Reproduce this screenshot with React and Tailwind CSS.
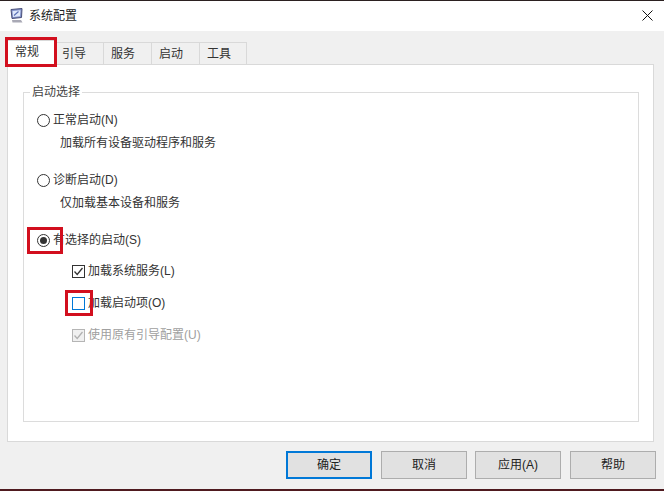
import React from 'react';

const tabs = [
    { label: '常规', cls: 'w-[48px] pl-[7px] pb-[2px] h-[24px] -mt-[2px] bg-white border-l' },
    { label: '引导', cls: 'w-[49px] pl-[7px] bg-[#f0f0f0]' },
    { label: '服务', cls: 'w-[48px] pl-[7px] bg-[#f0f0f0]' },
    { label: '启动', cls: 'w-[48px] pl-[7px] bg-[#f0f0f0]' },
    { label: '工具', cls: 'w-[47px] pl-[7px] bg-[#f0f0f0]' },
];

const Radio = ({ checked }) => (
    <span className="w-[13px] h-[13px] rounded-full border border-[#333333] bg-white flex items-center justify-center shrink-0">
        {checked && <span className="w-[7px] h-[7px] rounded-full bg-[#333333]" />}
    </span>
);

const Check = ({ checked, disabled, focus }) => (
    <span className={`w-[13px] h-[13px] border flex items-center justify-center shrink-0 ${disabled ? 'border-[#b5b5b5] bg-[#f0f0f0]' : focus ? 'border-[#0078d7] bg-white' : 'border-[#333333] bg-white'}`}>
        {checked && (
            <svg width="11" height="11" viewBox="0 0 11 11" fill="none">
                <path d="M1.5 5.5 L4.2 8.5 L9.5 2" stroke={disabled ? '#b0b0b0' : '#333333'} strokeWidth="1.3" />
            </svg>
        )}
    </span>
);

const Button = ({ label, primary, className }) => (
    <button className={`w-[86px] h-[28px] bg-[#e1e1e1] text-[12px] text-[#222222] ${primary ? 'border-2 border-[#0078d7]' : 'border border-[#adadad]'} ${className || ''}`}>
        {label}
    </button>
);

const RedBox = ({ className }) => (
    <div className={`absolute border-[3px] border-[#d20f1e] pointer-events-none ${className}`} />
);

export default function App() {
    return (
        <div className="relative w-[664px] h-[491px] overflow-hidden flex flex-col bg-[#f0f0f0] text-[12px] text-[#333333] font-['Liberation_Sans','Noto_Sans_CJK_SC',sans-serif]">
            <div className="h-px bg-[#2b2020]" />
            {/* title bar */}
            <div className="h-[30px] bg-white flex items-center pl-[9px] pr-[11px]">
                <svg width="15" height="15" viewBox="0 0 15 15" className="mr-[5px] -mt-[1px]">
                    <path d="M2 1.5 L13 0.5 L12.5 9.5 L3 10.5 Z" fill="#7f8fc8" stroke="#4a4f78" />
                    <path d="M3.5 3 L11.5 2.2 L11 8.2 L4 9 Z" fill="#dfe8fa" />
                    <path d="M5 7.5 L9.5 3.5" stroke="#5a6fb5" strokeWidth="1.2" />
                    <path d="M3 12 H12 L13.5 14.5 H3.5 Z" fill="#a9a9b5" />
                </svg>
                <span className="flex-1 text-[#222222] -mt-[1px]">系统配置</span>
                <svg width="11" height="11" viewBox="0 0 11 11" className="-mt-[1px]">
                    <path d="M0.5 0.5 L10.5 10.5 M10.5 0.5 L0.5 10.5" stroke="#111111" strokeWidth="1" />
                </svg>
            </div>

            <div className="flex-1 pt-[11px] pl-[7px] pr-[8px] flex flex-col">
                {/* tabs */}
                <div className="flex h-[22px] items-end">
                    {tabs.map((tab) => (
                        <div
                            key={tab.label}
                            className={`h-[22px] flex items-center justify-start border-[#d9d9d9] border-t border-r ${tab.cls}`}
                        >
                            {tab.label}
                        </div>
                    ))}
                </div>

                {/* tab panel */}
                <div className="h-[378px] w-[647px] bg-white border border-[#d9d9d9] pt-[19px] px-[15px]">
                    <fieldset className="h-[338px] w-[616px] border border-[#dcdcdc] pl-[13px]">
                        <legend className="-ml-[7px] px-[2px] leading-[16px] text-[#444444]">启动选择</legend>

                        <div className="flex items-center gap-[3px] h-[16px] mt-[12px]">
                            <Radio />
                            <span>正常启动(N)</span>
                        </div>
                        <div className="ml-[23px] mt-[7px] h-[16px] leading-[16px]">加载所有设备驱动程序和服务</div>

                        <div className="flex items-center gap-[3px] h-[16px] mt-[21px]">
                            <Radio />
                            <span>诊断启动(D)</span>
                        </div>
                        <div className="ml-[23px] mt-[7px] h-[16px] leading-[16px]">仅加载基本设备和服务</div>

                        <div className="flex items-center gap-[3px] h-[16px] mt-[21px]">
                            <Radio checked />
                            <span>有选择的启动(S)</span>
                        </div>

                        <div className="ml-[35px] mt-[15px] flex flex-col">
                            <div className="flex items-center gap-[3px] h-[16px]">
                                <Check checked />
                                <span>加载系统服务(L)</span>
                            </div>
                            <div className="flex items-center gap-[3px] h-[16px] mt-[16px]">
                                <Check focus />
                                <span>加载启动项(O)</span>
                            </div>
                            <div className="flex items-center gap-[3px] h-[16px] mt-[16px] text-[#a0a0a0]">
                                <Check checked disabled />
                                <span>使用原有引导配置(U)</span>
                            </div>
                        </div>
                    </fieldset>
                </div>

                {/* footer buttons */}
                <div className="flex justify-end mt-[9px]">
                    <Button label="确定" primary />
                    <Button label="取消" className="ml-[9px]" />
                    <Button label="应用(A)" className="ml-[8px]" />
                    <Button label="帮助" className="ml-[9px]" />
                </div>
            </div>

            <div className="h-[2px] bg-[#4f1a1f]" />

            {/* red annotation boxes */}
            <RedBox className="left-[5px] top-[37px] w-[52px] h-[30px]" />
            <RedBox className="left-[27px] top-[227px] w-[36px] h-[27px]" />
            <RedBox className="left-[65px] top-[290px] w-[28px] h-[26px]" />
        </div>
    );
}
